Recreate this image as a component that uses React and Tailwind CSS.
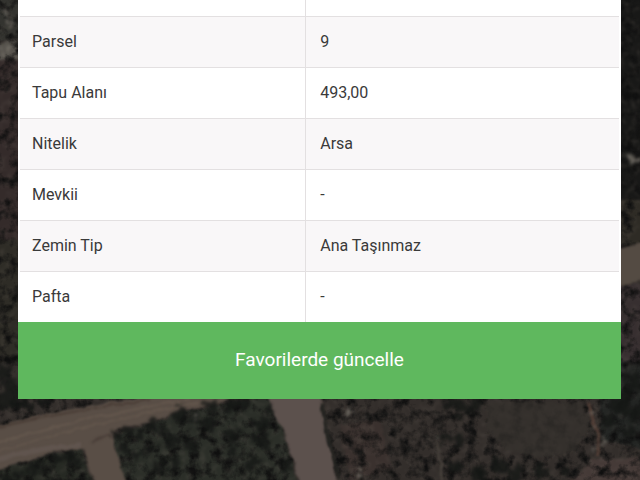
const rows = [
  { label: "Parsel", value: "9" },
  { label: "Tapu Alanı", value: "493,00" },
  { label: "Nitelik", value: "Arsa" },
  { label: "Mevkii", value: "-" },
  { label: "Zemin Tip", value: "Ana Taşınmaz" },
  { label: "Pafta", value: "-" },
];

// tree crowns and bushes: x, y, radius
const trees = [
  [4, 372, 9], [11, 388, 10], [3, 402, 9], [16, 404, 7], [28, 404, 6], [44, 402, 5],
  [6, 480, 6], [20, 475, 5], [32, 470, 6], [44, 466, 5], [56, 460, 6], [68, 456, 6], [76, 463, 5],
  [118, 437, 5], [129, 430, 5], [140, 434, 5], [152, 425, 6], [164, 429, 5], [180, 416, 8],
  [195, 421, 7], [208, 424, 8], [124, 450, 6], [136, 458, 6], [150, 448, 5], [160, 466, 6],
  [172, 440, 7], [190, 446, 6], [228, 408, 6], [240, 404, 8], [232, 436, 7], [262, 424, 7],
  [262, 442, 8], [252, 463, 7], [270, 410, 5], [286, 467, 6], [176, 462, 5], [236, 452, 5],
  [212, 408, 6], [448, 404, 6], [460, 407, 8], [475, 406, 8], [445, 437, 6], [458, 440, 6],
  [455, 466, 7], [480, 474, 8], [500, 467, 9], [516, 475, 9], [540, 470, 7], [565, 472, 5],
  [618, 405, 9], [632, 412, 9], [608, 422, 6], [634, 380, 9], [626, 395, 8], [630, 433, 6],
];

const specks = [
  [348, 412, 3], [195, 419, 2], [287, 459, 2], [591, 415, 2], [593, 427, 2], [604, 441, 3],
  [594, 450, 2], [358, 474, 2], [438, 438, 2], [630, 158, 4], [638, 160, 3], [5, 12, 3],
  [8, 22, 3], [4, 52, 4],
];

function Terrain() {
  return (
    <svg
      className="absolute inset-0 h-full w-full"
      viewBox="0 0 640 480"
      preserveAspectRatio="xMidYMid slice"
      aria-hidden="true"
    >
      <defs>
        <filter id="rough" x="-5%" y="-5%" width="110%" height="110%" colorInterpolationFilters="sRGB">
          <feTurbulence type="fractalNoise" baseFrequency="0.14" numOctaves="3" seed="4" result="n" />
          <feDisplacementMap in="SourceGraphic" in2="n" scale="18" xChannelSelector="R" yChannelSelector="G" />
          <feGaussianBlur stdDeviation="1.4" />
        </filter>
        <filter id="edge" x="-5%" y="-5%" width="110%" height="110%" colorInterpolationFilters="sRGB">
          <feTurbulence type="fractalNoise" baseFrequency="0.08" numOctaves="2" seed="9" result="n" />
          <feDisplacementMap in="SourceGraphic" in2="n" scale="6" xChannelSelector="R" yChannelSelector="G" />
          <feGaussianBlur stdDeviation="1.2" />
        </filter>
        <filter id="shade" x="0" y="0" width="100%" height="100%" colorInterpolationFilters="sRGB">
          <feTurbulence type="fractalNoise" baseFrequency="0.09" numOctaves="4" seed="12" />
          <feColorMatrix values="0 0 0 0 0.06  0 0 0 0 0.06  0 0 0 0 0.06  2.8 0 0 0 -1.2" />
          <feGaussianBlur stdDeviation="0.7" />
        </filter>
        <filter id="light" x="0" y="0" width="100%" height="100%" colorInterpolationFilters="sRGB">
          <feTurbulence type="fractalNoise" baseFrequency="0.16" numOctaves="3" seed="31" />
          <feColorMatrix values="0 0 0 0 0.4  0 0 0 0 0.37  0 0 0 0 0.34  0 2 0 0 -0.95" />
          <feGaussianBlur stdDeviation="0.8" />
        </filter>
      </defs>

      <rect width="640" height="480" fill="#332e2b" />
      <g filter="url(#edge)">
        <path d="M-5 -5H25V36L-5 42Z" fill="#33332f" />
        <path d="M-5 44L25 36V58L-5 62Z" fill="#55524c" />
        <path d="M-5 60H25V245H-5Z" fill="#342b2a" />
        <path d="M-5 240H25V362H-5Z" fill="#2e2c26" />
        <path d="M-5 470L80 448L96 490H-5Z" fill="#262923" />
        <path d="M112 438L180 412L275 395L298 490H122Z" fill="#2b2e28" />
        <path d="M615 -5H650V200H615Z" fill="#181817" />
        <path d="M615 200H650V245H615Z" fill="#2e2b25" />
        <path d="M615 284H650V365H615Z" fill="#372f30" />
        <path d="M615 362H650V450L600 440L600 400Z" fill="#242624" />
        <path d="M340 425L380 420L392 470L350 480Z" fill="#3a312e" />
        <path d="M565 490L590 460L650 458V490Z" fill="#453a37" />
      </g>
      <rect width="640" height="480" filter="url(#shade)" />
      <rect width="640" height="480" filter="url(#light)" opacity="0.35" />
      <g filter="url(#edge)">
        <path d="M486 402H582L590 425L576 450L540 458L505 450L487 430Z" fill="#35322d" opacity="0.75" />
        <path d="M615 250L650 241V280L615 287Z" fill="#544b43" />
        <path
          d="M-5 426L50 413L110 402L160 395H240L215 404L180 411L150 422L113 432L115 446L128 490H97L83 450L60 450L-5 471Z"
          fill="#594e46"
        />
        <path d="M266 395H320L328 440L338 490H301L284 430L274 414Z" fill="#5c514d" />
      </g>
      <g fill="none" filter="url(#edge)" strokeWidth="2">
        <path d="M-5 443C40 430 85 418 190 399" stroke="#6b5d51" opacity="0.6" />
        <path d="M-5 452C50 437 95 422 205 401" stroke="#6b5d51" opacity="0.5" />
        <path d="M-5 428C45 416 90 408 150 400" stroke="#42352e" opacity="0.7" />
        <path d="M-5 460C40 449 60 445 80 446" stroke="#665a55" opacity="0.6" strokeWidth="5" />
        <path d="M92 443C98 438 104 434 112 437" stroke="#3b302b" opacity="0.5" />
        <path d="M322 404L328 440L340 480" stroke="#232320" strokeWidth="3" />
        <path d="M437 441L443 480" stroke="#4a443e" />
        <path d="M590 402C588 420 606 432 596 456" stroke="#5b443a" opacity="0.8" strokeWidth="3" />
      </g>
      <g fill="#161816" opacity="0.8" filter="url(#rough)">
        {trees.map(([x, y, r]) => (
          <circle key={`${x}-${y}`} cx={x} cy={y} r={r} />
        ))}
      </g>
      <g fill="#77726a" opacity="0.8" filter="url(#rough)">
        {specks.map(([x, y, r]) => (
          <circle key={`${x}-${y}`} cx={x} cy={y} r={r} />
        ))}
      </g>
    </svg>
  );
}

export default function App() {
  return (
    <div className="relative min-h-screen overflow-hidden bg-[#332e2b] font-['Roboto','Noto_Sans',sans-serif]">
      <Terrain />
      <main className="relative mr-[19px] ml-[18px] bg-white">
        <div className="px-0.5">
          <table className="w-full table-fixed border-collapse text-base text-[#3a3a3a]">
            <colgroup>
              <col className="w-[47.7%]" />
              <col />
            </colgroup>
            <tbody>
              <tr className="h-4">
                <td className="border-r border-[#e3e0e1]" />
                <td />
              </tr>
              {rows.map((row) => (
                <tr key={row.label} className="h-[51px] border-t border-[#e3e0e1] even:bg-[#f9f7f8]">
                  <th scope="row" className="border-r border-[#e3e0e1] px-3 text-left font-normal">
                    {row.label}
                  </th>
                  <td className="px-3.5">{row.value}</td>
                </tr>
              ))}
            </tbody>
          </table>
        </div>
        <button type="button" className="block h-[77px] w-full bg-[#5fb85e] text-[19px] text-white">
          Favorilerde güncelle
        </button>
      </main>
    </div>
  );
}
